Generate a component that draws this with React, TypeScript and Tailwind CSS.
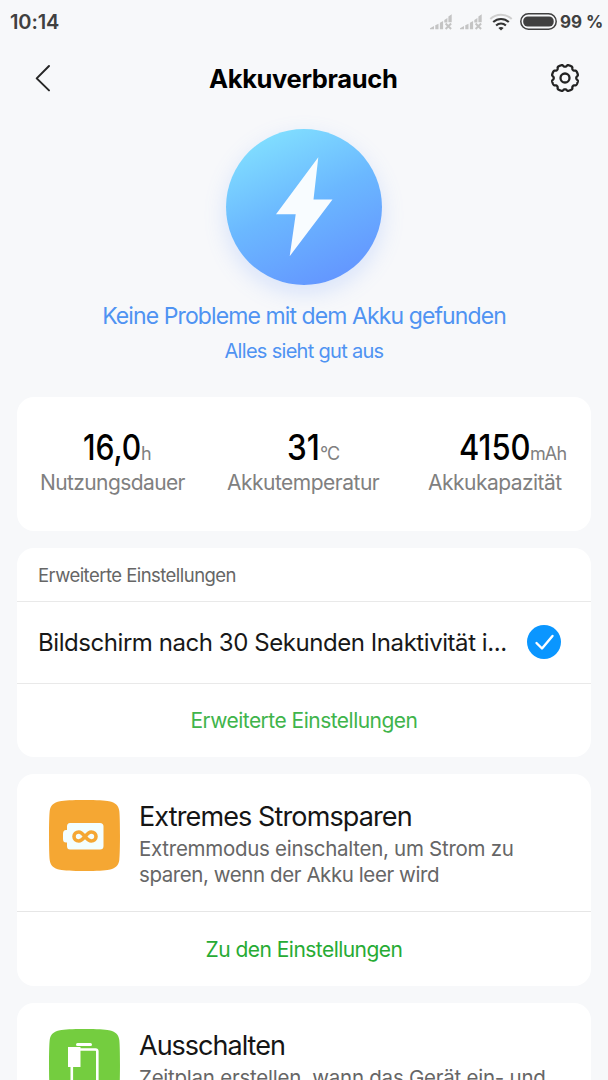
import React from "react";

const gearPath = () => {
  const pts: string[] = [];
  for (let i = 0; i < 240; i++) {
    const a = (i / 240) * Math.PI * 2;
    const r = 12.2 + 1.1 * Math.tanh(2.2 * (0.45 - Math.cos(8 * a)));
    pts.push(`${(15 + r * Math.cos(a)).toFixed(2)} ${(15 + r * Math.sin(a)).toFixed(2)}`);
  }
  return `M${pts.join("L")}Z`;
};

const GearIcon = () => (
  <svg width="30" height="30" viewBox="0 0 30 30" fill="none" stroke="#222" strokeWidth="2.3" strokeLinejoin="round">
    <path d={gearPath()} />
    <circle cx="15" cy="15" r="4.500" />
  </svg>
);

const BackIcon = () => (
  <svg width="16" height="28" viewBox="0 0 16 28" fill="none" stroke="#262626" strokeWidth="2" strokeLinecap="round" strokeLinejoin="round">
    <path d="M14 2L1.7 14.4L14 26.4" />
  </svg>
);

const SignalIcon = () => (
  <svg width="22" height="16" viewBox="0 0 22 16" fill="#c4c4c4">
    <path d="M0 15.300V14.200L4 12V15.300zM5.300 11.300L8.500 9.800V15.300H5.300zM9.900 8.700L13.100 7V15.300H9.900zM14.300 6L17.400 4V8.600H14.300zM18.400 2.500L21.700 0.300V8.300H18.400z" />
    <path d="M15.600 9.500L21.100 15M21.100 9.500L15.600 15" stroke="#c4c4c4" strokeWidth="2" />
  </svg>
);

const WifiIcon = () => (
  <svg width="24" height="18" viewBox="0 0 24 18" fill="none" strokeWidth="2">
    <path d="M1.300 6C7.300 0.200 16.700 0.200 22.700 6" stroke="#cfcfcf" />
    <path d="M4.200 9.100C8.700 4.900 15.300 4.900 19.800 9.100M7.100 12.500C9.900 9.900 14.100 9.900 16.900 12.500" stroke="#333" strokeWidth="2.100" />
    <path d="M9.400 15C10.900 13.700 13.100 13.700 14.600 15L12 17.600z" fill="#333" />
  </svg>
);

const BatteryIcon = () => (
  <svg width="37" height="17" viewBox="0 0 37 17">
    <rect x="0.800" y="0.800" width="35.400" height="15.400" rx="7.700" fill="none" stroke="#404040" strokeWidth="1.500" />
    <rect x="3.200" y="3.400" width="30.500" height="10.200" rx="4.600" fill="#404040" />
  </svg>
);

const BoltIcon = () => (
  <svg width="156" height="156" viewBox="0 0 156 156">
    <path d="M92.300 28.200L87.500 70.400H106.500L63.700 127.200L69.700 85.200H50z" fill="#f8fcff" />
  </svg>
);

const CheckIcon = () => (
  <svg width="34" height="34" viewBox="0 0 34 34">
    <circle cx="17" cy="17" r="17" fill="#0a96ff" />
    <path d="M9.500 18L15 23.500L25.500 11" fill="none" stroke="#fff" strokeWidth="2.400" strokeLinecap="round" strokeLinejoin="round" />
  </svg>
);

const TILE = "M35.500 0C48 0 56 .4 60 1.200C66.500 2.400 69.500 5.500 70.300 11C71.200 18 71.200 53 70.300 60C69.500 65.500 66.500 68.600 60 69.800C56 70.600 48 71 35.500 71C23 71 15 70.600 11 69.800C4.500 68.600 1.500 65.500.700 60C-.2 53-.2 18 .700 11C1.500 5.500 4.500 2.400 11 1.200C15 .4 23 0 35.500 0Z";

const SavingIcon = () => (
  <svg width="71" height="71" viewBox="0 0 71 71">
    <path d={TILE} fill="#f5a733" />
    <path d="M21 23H51Q54.500 23 54.500 26.500V46Q54.500 49.500 51 49.500H21Q18 49.500 18 46V42.500H17Q14 42.500 14 39V34Q14 30 17 30H18V26.500Q18 23 21 23Z" fill="#f3fefe" />
    <path d="M36 36.500C33.500 33.500 32 32 29.800 32C27 32 25 34 25 36.500C25 39 27 41 29.800 41C32 41 33.500 39.500 36 36.500C38.500 33.500 40 32 42.200 32C45 32 47 34 47 36.500C47 39 45 41 42.200 41C40 41 38.500 39.500 36 36.500Z" fill="none" stroke="#f5a733" strokeWidth="3.600" />
  </svg>
);

const PowerOffIcon = () => (
  <svg width="71" height="71" viewBox="0 0 71 71">
    <path d={TILE} fill="#74cd3f" />
    <rect x="27" y="14" width="16" height="3" rx="1.500" fill="#fff" />
    <rect x="19" y="18" width="12.500" height="20" fill="#fff" />
    <path d="M31 20.500H46.500Q48.300 20.500 48.300 22.300V56H22.800V37" fill="none" stroke="#fff" strokeWidth="2.600" />
  </svg>
);

const STATS = [
  { value: "16,0", unit: "h", label: "Nutzungsdauer", scale: "scale-x-[0.86]", box: "w-[58px]", wrap: "pl-[66px]", labelCls: "pl-[23px] tracking-[-0.6px]" },
  { value: "31", unit: "°C", label: "Akkutemperatur", scale: "scale-x-[0.9]", box: "w-[33.5px]", wrap: "pl-[78px]", labelCls: "pl-[18.5px] tracking-[-0.5px]" },
  { value: "4150", unit: "mAh", label: "Akkukapazität", scale: "scale-x-[0.885]", box: "w-[71.5px]", wrap: "pl-[59px]", labelCls: "pl-[28.5px] tracking-[-0.52px]" },
];

const Stats = () => (
  <section className="flex h-[134px] rounded-[17px] bg-white pt-[31px]">
    {STATS.map((s, i) => (
      <div key={s.label} className={i === 1 ? "w-[191px] shrink-0" : "w-[191.5px] shrink-0"}>
        <div className={`flex h-[39px] items-baseline leading-[39px] ${s.wrap}`}>
          <span className={`shrink-0 ${s.box}`}>
            <span className={`inline-block origin-left text-[35px] font-medium text-black ${s.scale}`}>{s.value}</span>
          </span>
          <span className="text-[18px] tracking-[-0.9px] text-[#808080]">{s.unit}</span>
        </div>
        <div className={`mt-[3px] text-[21px] leading-[26px] text-[#808080] ${s.labelCls}`}>{s.label}</div>
      </div>
    ))}
  </section>
);

const App = () => {
  return (
    <div className="flex h-[1080px] w-[608px] flex-col overflow-hidden bg-[#f7f8fa] font-['Inter',sans-serif] whitespace-nowrap">
      {/* Status bar */}
      <div className="flex h-[43px] shrink-0 items-center pr-[4px] pl-[10px] text-[#404040]">
        <span className="text-[20px] leading-[24px] font-semibold tracking-[-0.1px]">10:14</span>
        <div className="ml-auto flex items-center">
          <SignalIcon />
          <div className="ml-[8px]"><SignalIcon /></div>
          <div className="ml-[7px]"><WifiIcon /></div>
          <div className="ml-[7px]"><BatteryIcon /></div>
          <span className="ml-[3px] w-[44px] text-[17px] leading-[24px] font-bold">99 %</span>
        </div>
      </div>

      {/* Header */}
      <header className="flex h-[70px] shrink-0 items-center pr-[28px] pl-[35px]">
        <div className="w-[174px]"><BackIcon /></div>
        <h1 className="pt-px text-[25.5px] leading-[32px] font-bold tracking-[-0.35px] text-black">Akkuverbrauch</h1>
        <div className="ml-auto"><GearIcon /></div>
      </header>

      {/* Battery state */}
      <div className="flex h-[284px] shrink-0 flex-col items-center pt-[16px] text-[#4f93f2]">
        <div className="size-[156px] rounded-full bg-linear-[155deg,#84e4ff_5%,#6bb8ff_48%,#6291ff_95%] shadow-[0_8px_22px_rgba(99,148,255,0.22)]">
          <BoltIcon />
        </div>
        <p className="mt-[16px] text-[23px] leading-[30px] tracking-[-0.9px]">Keine Probleme mit dem Akku gefunden</p>
        <p className="mt-[7px] text-[20px] leading-[26px] tracking-[-0.7px]">Alles sieht gut aus</p>
      </div>

      <main className="flex flex-col gap-[17px] px-[17px]">
        <Stats />

        <section className="h-[209px] rounded-[17px] bg-white">
          <div className="h-[54px] border-b border-[#e9e9e9] pl-[21px] text-[18.5px] leading-[54px] tracking-[-0.54px] text-[#666]">
            Erweiterte Einstellungen
          </div>
          <div className="flex h-[82px] items-center justify-between border-b border-[#e9e9e9] pr-[30px] pb-px pl-[21px]">
            <span className="pt-px text-[24px] leading-[32px] tracking-[-0.44px] text-[#181818]">
              Bildschirm nach 30 Sekunden Inaktivität i...
            </span>
            <CheckIcon />
          </div>
          <div className="text-center text-[21px] leading-[74px] tracking-[-0.52px] text-[#40b44b]">Erweiterte Einstellungen</div>
        </section>

        <section className="h-[212px] rounded-[17px] bg-white">
          <div className="flex h-[138px] border-b border-[#e6e6e6] pt-[26px] pl-[32px]">
            <SavingIcon />
            <div className="ml-[19px]">
              <h2 className="text-[27px] leading-[34px] tracking-[-0.88px] text-[#151515]">Extremes Stromsparen</h2>
              <div className="mt-[2px] text-[20.5px] leading-[26px] text-[#666]">
                <p className="tracking-[-0.28px]">Extremmodus einschalten, um Strom zu</p>
                <p className="tracking-[-0.42px]">sparen, wenn der Akku leer wird</p>
              </div>
            </div>
          </div>
          <div className="text-center text-[21px] leading-[75px] tracking-[-0.54px] text-[#27ab34]">Zu den Einstellungen</div>
        </section>

        <section className="h-[212px] shrink-0 rounded-[17px] bg-white">
          <div className="flex h-[138px] pt-[26px] pl-[32px]">
            <PowerOffIcon />
            <div className="ml-[19px]">
              <h2 className="text-[27px] leading-[34px] tracking-[-1px] text-[#151515]">Ausschalten</h2>
              <p className="mt-[2px] text-[20.5px] leading-[26px] tracking-[-0.24px] text-[#666]">
                Zeitplan erstellen, wann das Gerät ein- und
              </p>
            </div>
          </div>
        </section>
      </main>
    </div>
  );
};

export default App;
